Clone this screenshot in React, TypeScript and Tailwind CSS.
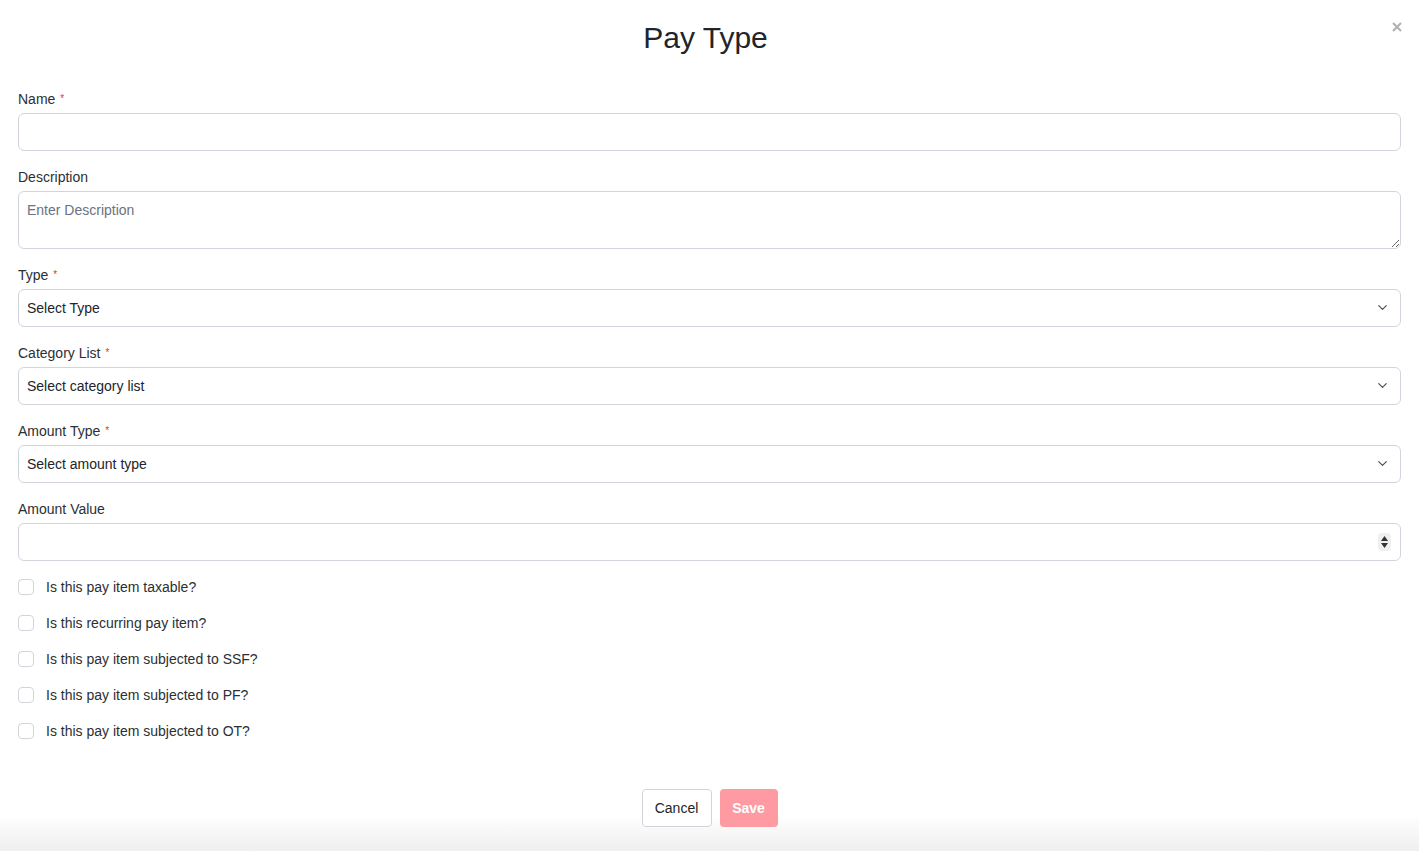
import { ChevronDown } from 'lucide-react'

const font = { fontFamily: '"Liberation Sans", Arial, sans-serif' }

function Label({ text, required }: { text: string; required?: boolean }) {
  return (
    <label className="flex h-5 items-center text-sm leading-5 text-[#2b2f33] mb-1">
      {text}
      {required && <span className="ml-[5px] self-start mt-[4px] text-[10px] leading-3 text-[#e3342f]">*</span>}
    </label>
  )
}

function Select({ placeholder }: { placeholder: string }) {
  return (
    <div className="relative">
      <select
        defaultValue=""
        className="block h-[38px] w-full appearance-none rounded-md border border-[#d1d5db] bg-white px-2 text-sm text-[#212529] outline-none"
        style={font}
      >
        <option value="">{placeholder}</option>
      </select>
      <ChevronDown className="pointer-events-none absolute right-[11px] top-[11px] h-[15px] w-[15px] text-[#4b5563]" strokeWidth={2} />
    </div>
  )
}

const checks = [
  'Is this pay item taxable?',
  'Is this recurring pay item?',
  'Is this pay item subjected to SSF?',
  'Is this pay item subjected to PF?',
  'Is this pay item subjected to OT?',
]

export default function App() {
  return (
    <div className="relative flex h-[851px] w-full flex-col bg-white" style={font}>
      <button className="absolute right-[17px] top-[22px] text-[#b0b0b0]">
        <svg width="10" height="10" viewBox="0 0 10 10">
          <path d="M1 1L9 9M9 1L1 9" stroke="currentColor" strokeWidth="2" />
        </svg>
      </button>
      <h1 className="pr-2 pt-[19px] text-center text-[30px] leading-[38px] text-[#212529]">Pay Type</h1>

      <form className="flex flex-col gap-4 px-[18px] pt-[32px]">
        <div>
          <Label text="Name" required />
          <input className="block h-[38px] w-full rounded-md border border-[#d1d5db] px-2 text-sm outline-none" />
        </div>
        <div>
          <Label text="Description" />
          <textarea
            placeholder="Enter Description"
            className="block h-[58px] w-full rounded-md border border-[#d1d5db] px-2 py-[8px] text-sm leading-5 outline-none placeholder:text-[#6b7280]"
            style={font}
          />
        </div>
        <div>
          <Label text="Type" required />
          <Select placeholder="Select Type" />
        </div>
        <div>
          <Label text="Category List" required />
          <Select placeholder="Select category list" />
        </div>
        <div>
          <Label text="Amount Type" required />
          <Select placeholder="Select amount type" />
        </div>
        <div>
          <Label text="Amount Value" />
          <div className="relative">
            <input className="block h-[38px] w-full rounded-md border border-[#d1d5db] px-2 text-sm outline-none" />
            <div className="pointer-events-none absolute right-[10px] top-[10px] flex h-[18px] w-[13px] flex-col items-center justify-center gap-[2px] rounded-sm bg-[#f0f0f0]">
              <svg width="7" height="5" viewBox="0 0 7 5"><path d="M3.5 0L7 5H0z" fill="#333" /></svg>
              <svg width="7" height="5" viewBox="0 0 7 5"><path d="M0 0H7L3.5 5z" fill="#333" /></svg>
            </div>
          </div>
        </div>
        {checks.map((c) => (
          <label key={c} className="flex h-5 items-center gap-3 text-sm text-[#2b2f33]">
            <span className="h-4 w-4 rounded-[4px] border border-[#d1d5db] bg-white" />
            {c}
          </label>
        ))}
      </form>

      <div className="mt-auto flex h-[81px] justify-center gap-2 bg-gradient-to-b from-white from-55% to-[#efefef] pt-[19px]">
        <button className="h-[38px] w-[70px] rounded border border-[#d1d5db] bg-white text-sm text-[#212529]">Cancel</button>
        <button className="h-[38px] w-[58px] rounded bg-[#fe9aa2] text-sm font-bold text-white">Save</button>
      </div>
    </div>
  )
}
